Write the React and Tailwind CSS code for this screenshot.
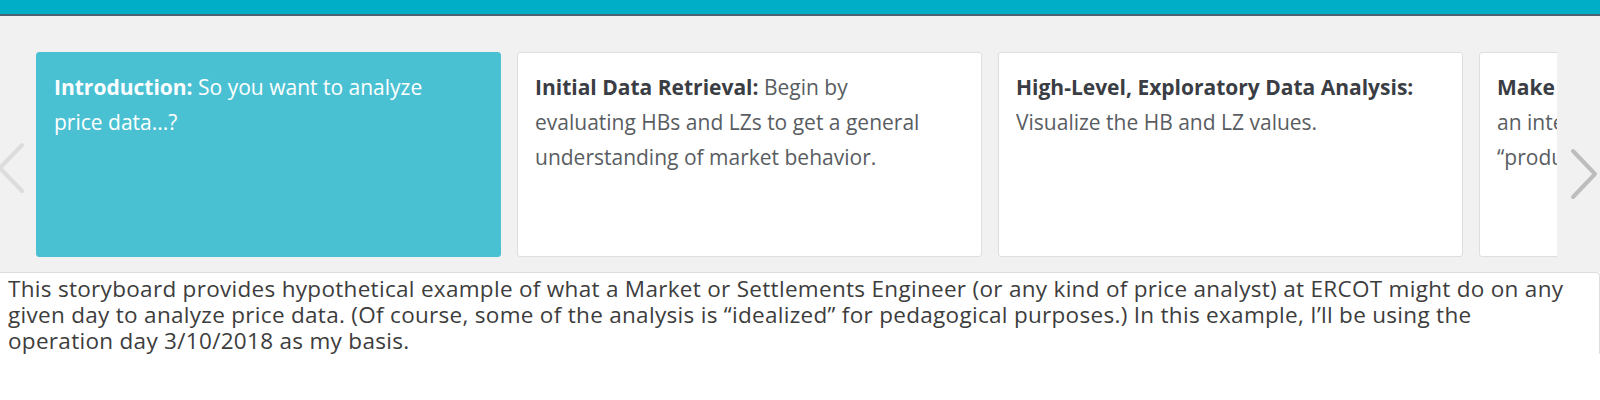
const cards = [
  {
    title: "Introduction:",
    body: "So you want to analyze price data...?",
    active: true,
  },
  {
    title: "Initial Data Retrieval:",
    body: "Begin by evaluating HBs and LZs to get a general understanding of market behavior.",
  },
  {
    title: "High-Level, Exploratory Data Analysis:",
    body: "Visualize the HB and LZ values.",
  },
  {
    title: "Make It Production-Ready:",
    lead: "Develop",
    body: "an interactive app and get it into “production.”",
  },
];

function Chevron({ dir, className }) {
  return (
    <svg width="30" height="52" viewBox="0 0 30 52" fill="none" className={className}>
      <path
        d={dir === "left" ? "M26 3 L4 26 L26 49" : "M4 3 L26 26 L4 49"}
        stroke="currentColor"
        strokeWidth="4"
        strokeLinecap="round"
        strokeLinejoin="round"
      />
    </svg>
  );
}

export default function App() {
  return (
    <div className="w-full h-[400px] overflow-hidden bg-white font-['Open_Sans',sans-serif]">
      {/* top bar */}
      <div className="h-[16px] bg-[#00aec7] border-b-2 border-[#4d6470]" />

      {/* storyboard carousel */}
      <div className="relative bg-[#f1f1f2] pt-[36px] pb-[15px]">
        <Chevron dir="left" className="absolute left-[-4px] top-[126px] text-[#dcdcdc]" />
        <div className="ml-[36px] mr-[43px] overflow-hidden">
          <div className="flex gap-[16px]">
            {cards.map((c) => (
              <div
                key={c.title}
                className={`w-[465px] h-[205px] shrink-0 rounded-[3px] border pl-[17px] pr-[30px] py-[17px] text-[21px] leading-[35px] ${
                  c.active
                    ? "bg-[#4ac1d3] border-[#4ac1d3] text-white"
                    : "bg-white border-[#dedede] text-[#595d62]"
                }`}
              >
                <span className={`font-bold ${c.active ? "text-white" : "text-[#3a3e44]"}`}>
                  {c.title}
                </span>{" "}
                {c.lead && (
                  <>
                    {c.lead}
                    <br />
                  </>
                )}
                {c.body}
              </div>
            ))}
          </div>
        </div>
        <Chevron dir="right" className="absolute right-[1px] top-[132px] text-[#bdbdbd]" />
      </div>

      {/* description */}
      <div className="border-t border-r border-[#dddddd] rounded-tr-[4px] pl-[8px] pr-[4px] pt-[3px] text-[22.5px] leading-[26px] tracking-[0.3px] text-[#3d3d3d]">
        This storyboard provides hypothetical example of what a Market or Settlements Engineer (or any kind of price analyst) at ERCOT might do on any given day to analyze price data. (Of course, some of the analysis is “idealized” for pedagogical purposes.) In this example, I’ll be using the
        <br />
        operation day 3/10/2018 as my basis.
      </div>
    </div>
  );
}
